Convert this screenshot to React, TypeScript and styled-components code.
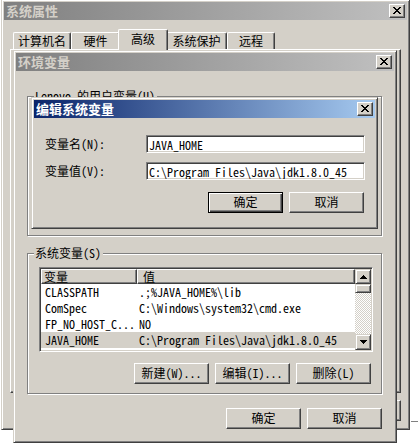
import React from "react";
import styled, { createGlobalStyle } from "styled-components";

const FACE = "#d4d0c8";
const SHADOW = "#808080";
const DARK = "#404040";
const LIGHT = "#ffffff";
const UI = `"Noto Sans Mono CJK SC", "Noto Sans CJK SC", "Liberation Sans", sans-serif`;
const MONO = `"Noto Sans Mono CJK SC", "Liberation Mono", monospace`;

const GlobalStyle = createGlobalStyle`
  html, body { margin: 0; padding: 0; background: #fff; }
  body { font-family: ${UI}; font-size: 12px; color: #000; }
`;

const Desktop = styled.div`
  position: relative;
  width: 418px;
  height: 444px;
  overflow: hidden;
  background: #fff;
`;

const BackdropEdge = styled.div`
  position: absolute;
  left: 411px;
  top: 421px;
  width: 7px;
  height: 1px;
  background: ${SHADOW};
`;

const Window = styled.div<{ $x: number; $y: number; $w: number; $h: number }>`
  position: absolute;
  left: ${(p) => p.$x}px;
  top: ${(p) => p.$y}px;
  width: ${(p) => p.$w}px;
  height: ${(p) => p.$h}px;
  box-sizing: border-box;
  background: ${FACE};
  border: 1px solid;
  border-color: ${FACE} ${DARK} ${DARK} ${FACE};
  box-shadow: inset 1px 1px 0 ${LIGHT}, inset -1px -1px 0 ${SHADOW};
  padding: 2px;
  display: flex;
  flex-direction: column;
`;

const TitleBar = styled.div<{ $active?: boolean }>`
  flex: none;
  height: 18px;
  display: flex;
  align-items: center;
  justify-content: space-between;
  padding: 0 2px 0 2px;
  background: ${(p) =>
    p.$active
      ? "linear-gradient(to right, #0a246a, #a6caf0)"
      : "linear-gradient(to right, #808080, #c0c0c0)"};
  color: ${(p) => (p.$active ? "#ffffff" : FACE)};
`;

const TitleText = styled.span`
  font-family: "Noto Sans CJK SC", sans-serif;
  font-weight: 700;
  font-size: 13px;
  line-height: 18px;
`;

const CloseButton = styled.div`
  box-sizing: border-box;
  width: 16px;
  height: 14px;
  background: ${FACE};
  border: 1px solid;
  border-color: ${LIGHT} ${DARK} ${DARK} ${LIGHT};
  box-shadow: inset -1px -1px 0 ${SHADOW};
  display: flex;
  align-items: center;
  justify-content: center;
  padding: 0 1px 1px 0;
`;

const CloseGlyph = () => (
  <svg width="8" height="7" viewBox="0 0 8 7" shapeRendering="crispEdges">
    <path
      d="M0 0h2v1H0zM6 0h2v1H6zM1 1h2v1H1zM5 1h2v1H5zM2 2h4v1H2zM3 3h2v1H3zM2 4h4v1H2zM1 5h2v1H1zM5 5h2v1H5zM0 6h2v1H0zM6 6h2v1H6z"
      fill="#000"
    />
  </svg>
);

const PushButton = styled.div<{ $default?: boolean }>`
  box-sizing: border-box;
  width: 75px;
  height: 21px;
  background: ${FACE};
  border: 1px solid;
  border-color: ${(p) => (p.$default ? "#000" : `${LIGHT} ${DARK} ${DARK} ${LIGHT}`)};
  box-shadow: ${(p) =>
    p.$default
      ? `inset 1px 1px 0 ${LIGHT}, inset -1px -1px 0 ${DARK}, inset -2px -2px 0 ${SHADOW}`
      : `inset -1px -1px 0 ${SHADOW}`};
  display: flex;
  align-items: center;
  justify-content: center;
  font-family: ${UI};
  font-size: 12px;
  line-height: 1;
  padding-bottom: 1px;
`;

const ButtonRow = styled.div<{ $top?: number; $right?: number }>`
  flex: none;
  display: flex;
  justify-content: flex-end;
  gap: 6px;
  margin-top: ${(p) => p.$top ?? 0}px;
  margin-right: ${(p) => p.$right ?? 0}px;
`;

/* ---------- outer window (系统属性) ---------- */

const OuterBody = styled.div`
  flex: 1;
  display: flex;
  flex-direction: column;
  padding: 9px 6px 0 6px;
`;

const TabStrip = styled.div`
  flex: none;
  height: 20px;
  display: flex;
  align-items: flex-end;
  padding-left: 3px;
  position: relative;
  z-index: 1;
`;

const Tab = styled.div<{ $w: number; $selected?: boolean }>`
  position: relative;
  z-index: ${(p) => (p.$selected ? 2 : 1)};
  box-sizing: border-box;
  width: ${(p) => p.$w}px;
  height: ${(p) => (p.$selected ? 21 : 17)}px;
  margin: 0 ${(p) => (p.$selected ? -2 : 0)}px ${(p) => (p.$selected ? -1 : 0)}px;
  background: ${FACE};
  border: 1px solid;
  border-color: ${LIGHT} ${DARK} transparent ${LIGHT};
  border-bottom: none;
  border-radius: 2px 2px 0 0;
  box-shadow: inset -1px 0 0 ${SHADOW};
  display: flex;
  align-items: center;
  justify-content: center;
  font-size: 12px;
  line-height: 1;
  padding-bottom: ${(p) => (p.$selected ? 3 : 0)}px;
`;

const TabPane = styled.div`
  flex: none;
  height: 344px;
  box-sizing: border-box;
  background: ${FACE};
  border: 1px solid;
  border-color: ${LIGHT} ${DARK} ${DARK} ${LIGHT};
  box-shadow: inset -1px -1px 0 ${SHADOW};
`;

/* ---------- env window (环境变量) ---------- */

const EnvBody = styled.div`
  flex: 1;
  display: flex;
  flex-direction: column;
  padding: 25px 12px 11px 11px;
`;

const GroupBox = styled.div<{ $h: number; $top?: number }>`
  position: relative;
  flex: none;
  box-sizing: border-box;
  height: ${(p) => p.$h}px;
  margin-top: ${(p) => p.$top ?? 0}px;
  border: 1px solid ${SHADOW};
  box-shadow: 1px 1px 0 ${LIGHT}, inset 1px 1px 0 ${LIGHT};
  padding: 13px 9px 0 11px;
  display: flex;
  flex-direction: column;
`;

const Legend = styled.span`
  position: absolute;
  top: -8px;
  left: 6px;
  padding: 0 2px 0 1px;
  background: ${FACE};
  font-size: 12px;
  line-height: 14px;
  white-space: nowrap;
`;

const ListView = styled.div<{ $h: number }>`
  flex: none;
  align-self: flex-start;
  box-sizing: border-box;
  width: 334px;
  height: ${(p) => p.$h}px;
  background: #fff;
  border: 1px solid;
  border-color: ${SHADOW} ${LIGHT} ${LIGHT} ${SHADOW};
  box-shadow: inset 1px 1px 0 ${DARK}, inset -1px -1px 0 ${FACE};
  padding: 1px;
  display: flex;
`;

const TableArea = styled.div`
  flex: 1;
  display: flex;
  flex-direction: column;
  overflow: hidden;
`;

const HeaderRow = styled.div`
  flex: none;
  display: grid;
  grid-template-columns: 96px 1fr;
  height: 15px;
`;

const HeaderCell = styled.div<{ $pad: number }>`
  box-sizing: border-box;
  background: ${FACE};
  border: 1px solid;
  border-color: ${LIGHT} ${DARK} ${DARK} ${LIGHT};
  box-shadow: inset -1px -1px 0 ${SHADOW};
  padding-left: ${(p) => p.$pad}px;
  display: flex;
  align-items: center;
  font-size: 12px;
  line-height: 1;
  overflow: hidden;
`;

const Row = styled.div<{ $selected?: boolean }>`
  flex: none;
  display: grid;
  grid-template-columns: 96px 1fr;
  height: 16px;
  background: ${(p) => (p.$selected ? FACE : "transparent")};
`;

const Cell = styled.div<{ $pad: number }>`
  padding-left: ${(p) => p.$pad}px;
  display: flex;
  align-items: center;
  font-family: ${MONO};
  font-size: 12px;
  line-height: 1;
  white-space: nowrap;
  overflow: hidden;
`;

const ScrollBar = styled.div`
  flex: none;
  width: 16px;
  display: flex;
  flex-direction: column;
`;

const ScrollPart = styled.div<{ $h: number }>`
  flex: none;
  box-sizing: border-box;
  height: ${(p) => p.$h}px;
  background: ${FACE};
  border: 1px solid;
  border-color: ${FACE} ${DARK} ${DARK} ${FACE};
  box-shadow: inset 1px 1px 0 ${LIGHT}, inset -1px -1px 0 ${SHADOW};
  display: flex;
  align-items: center;
  justify-content: center;
`;

const ScrollTrack = styled.div`
  flex: 1;
  background: repeating-conic-gradient(${LIGHT} 0 25%, ${FACE} 0 50%) 0 0 / 2px 2px;
`;

const ArrowUp = () => (
  <svg width="7" height="4" viewBox="0 0 7 4" shapeRendering="crispEdges">
    <path d="M3 0h1v1H3zM2 1h3v1H2zM1 2h5v1H1zM0 3h7v1H0z" fill="#000" />
  </svg>
);

const ArrowDown = () => (
  <svg width="7" height="4" viewBox="0 0 7 4" shapeRendering="crispEdges">
    <path d="M0 0h7v1H0zM1 1h5v1H1zM2 2h3v1H2zM3 3h1v1H3z" fill="#000" />
  </svg>
);

/* ---------- edit dialog (编辑系统变量) ---------- */

const EditBody = styled.div`
  flex: 1;
  display: flex;
  flex-direction: column;
  padding: 17px 10px 13px 11px;
`;

const FieldRow = styled.div<{ $top?: number }>`
  flex: none;
  display: grid;
  grid-template-columns: 101px 219px;
  height: 18px;
  margin-top: ${(p) => p.$top ?? 0}px;
  align-items: center;
`;

const FieldLabel = styled.label`
  font-size: 12px;
  line-height: 1;
  white-space: nowrap;
`;

const TextField = styled.input`
  box-sizing: border-box;
  width: 219px;
  height: 18px;
  margin: 0;
  padding: 0 2px;
  background: #fff;
  border: 1px solid;
  border-color: ${SHADOW} ${LIGHT} ${LIGHT} ${SHADOW};
  box-shadow: inset 1px 1px 0 ${DARK}, inset -1px -1px 0 ${FACE};
  font-family: ${MONO};
  font-size: 12px;
  color: #000;
  outline: none;
`;

type Var = { name: string; value: string; selected?: boolean };

const sysVars: Var[] = [
  { name: "CLASSPATH", value: ".;%JAVA_HOME%\\lib" },
  { name: "ComSpec", value: "C:\\Windows\\system32\\cmd.exe" },
  { name: "FP_NO_HOST_C...", value: "NO" },
  { name: "JAVA_HOME", value: "C:\\Program Files\\Java\\jdk1.8.0_45", selected: true },
];

const tabs = [
  { label: "计算机名", w: 58 },
  { label: "硬件", w: 49 },
  { label: "高级", w: 50, selected: true },
  { label: "系统保护", w: 61 },
  { label: "远程", w: 48 },
];

/* The user-variable list lies wholly behind the edit dialog: only its frame is drawn. */
const VarList = ({ items, h, covered }: { items: Var[]; h: number; covered?: boolean }) => (
  <ListView $h={h}>
    <TableArea>
      {!covered && (
        <HeaderRow>
          <HeaderCell $pad={2}>变量</HeaderCell>
          <HeaderCell $pad={5}>值</HeaderCell>
        </HeaderRow>
      )}
      {items.map((v) => (
        <Row key={v.name} $selected={v.selected}>
          <Cell $pad={4}>{v.name}</Cell>
          <Cell $pad={2}>{v.value}</Cell>
        </Row>
      ))}
    </TableArea>
    <ScrollBar>
      <ScrollPart $h={15}>
        <ArrowUp />
      </ScrollPart>
      <ScrollPart $h={9} />
      <ScrollTrack />
      <ScrollPart $h={16}>
        <ArrowDown />
      </ScrollPart>
    </ScrollBar>
  </ListView>
);

export default function App() {
  return (
    <>
      <GlobalStyle />
      <Desktop>
        <BackdropEdge />

        <Window $x={1} $y={-1} $w={409} $h={431}>
          <TitleBar>
            <TitleText>系统属性</TitleText>
            <CloseButton>
              <CloseGlyph />
            </CloseButton>
          </TitleBar>
          <OuterBody>
            <TabStrip>
              {tabs.map((t) => (
                <Tab key={t.label} $w={t.w} $selected={t.selected}>
                  {t.label}
                </Tab>
              ))}
            </TabStrip>
            <TabPane />
            <ButtonRow $top={7}>
              <PushButton />
              <PushButton />
              <PushButton />
            </ButtonRow>
          </OuterBody>
        </Window>

        <Window $x={13} $y={50} $w={384} $h={393}>
          <TitleBar>
            <TitleText>环境变量</TitleText>
            <CloseButton>
              <CloseGlyph />
            </CloseButton>
          </TitleBar>
          <EnvBody>
            <GroupBox $h={140}>
              <Legend>Lenovo 的用户变量(U)</Legend>
              <VarList items={[]} h={87} covered />
              <ButtonRow $top={11} $right={1}>
                <PushButton />
                <PushButton />
                <PushButton />
              </ButtonRow>
            </GroupBox>
            <GroupBox $h={141} $top={17}>
              <Legend>系统变量(S)</Legend>
              <VarList items={sysVars} h={85} />
              <ButtonRow $top={11} $right={1}>
                <PushButton>新建(W)...</PushButton>
                <PushButton>编辑(I)...</PushButton>
                <PushButton>删除(L)</PushButton>
              </ButtonRow>
            </GroupBox>
            <ButtonRow $top={14}>
              <PushButton>确定</PushButton>
              <PushButton>取消</PushButton>
            </ButtonRow>
          </EnvBody>
        </Window>

        <Window $x={31} $y={97} $w={347} $h={132}>
          <TitleBar $active>
            <TitleText>编辑系统变量</TitleText>
            <CloseButton>
              <CloseGlyph />
            </CloseButton>
          </TitleBar>
          <EditBody>
            <FieldRow>
              <FieldLabel>变量名(N):</FieldLabel>
              <TextField readOnly defaultValue="JAVA_HOME" />
            </FieldRow>
            <FieldRow $top={9}>
              <FieldLabel>变量值(V):</FieldLabel>
              <TextField readOnly defaultValue="C:\Program Files\Java\jdk1.8.0_45" />
            </FieldRow>
            <ButtonRow $top={12} $right={1}>
              <PushButton $default>确定</PushButton>
              <PushButton>取消</PushButton>
            </ButtonRow>
          </EditBody>
        </Window>
      </Desktop>
    </>
  );
}
